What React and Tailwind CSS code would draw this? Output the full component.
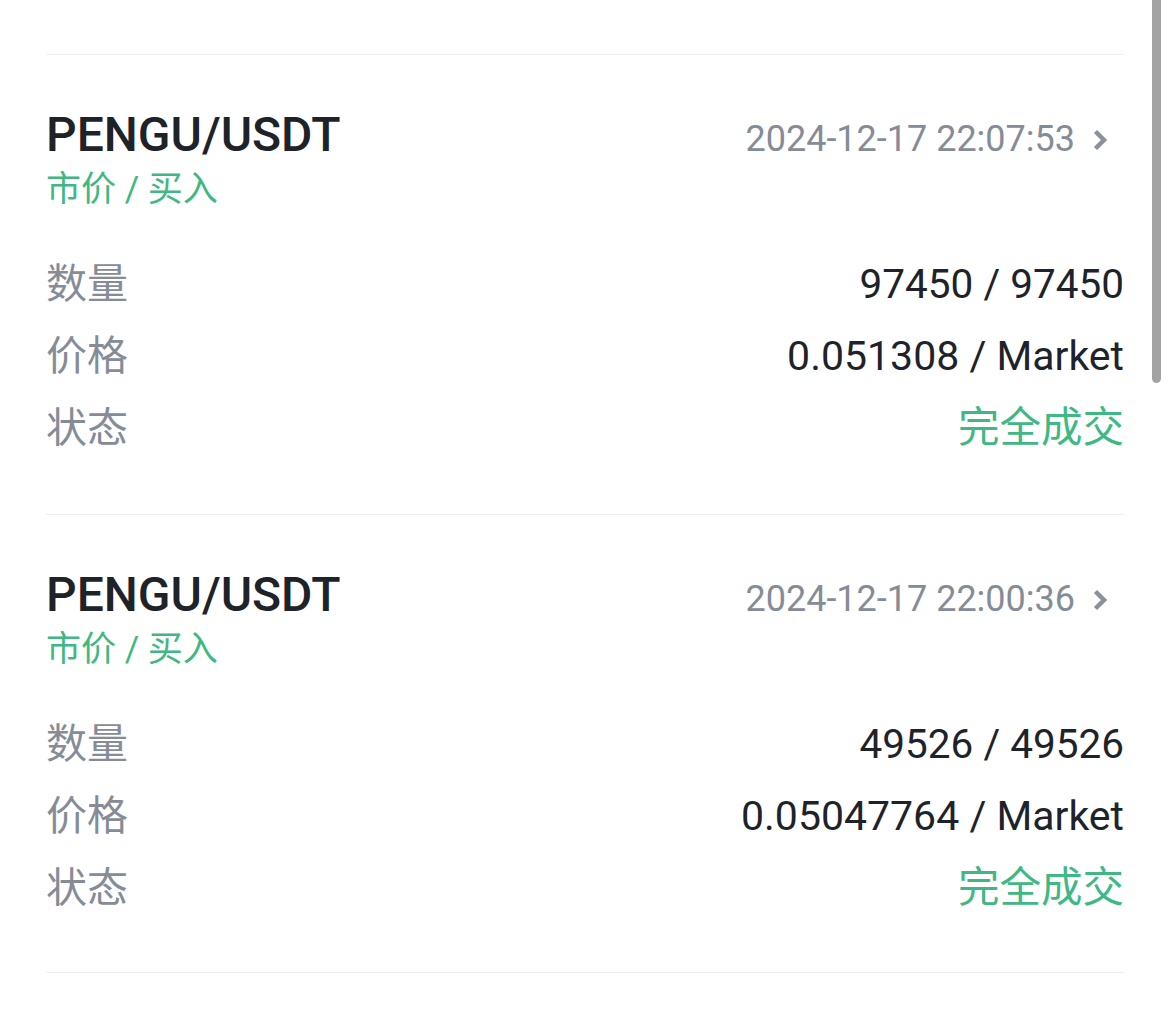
const orders = [
  { pair: 'PENGU/USDT', type: '市价 / 买入', time: '2024-12-17 22:07:53', qty: '97450 / 97450', price: '0.051308 / Market', status: '完全成交' },
  { pair: 'PENGU/USDT', type: '市价 / 买入', time: '2024-12-17 22:00:36', qty: '49526 / 49526', price: '0.05047764 / Market', status: '完全成交' },
]

const font = { fontFamily: 'Roboto, "Noto Sans CJK SC", sans-serif' }

const Chevron = () => (
  <svg width="18" height="24" viewBox="0 0 18 24" className="ml-[16px] mr-[15px] shrink-0 self-center translate-y-[1px]">
    <path d="M4.5 3.5 L13 12 L4.5 20.5" fill="none" stroke="#8a919c" strokeWidth="4.5" strokeLinecap="butt" strokeLinejoin="miter" />
  </svg>
)

const Row = ({ label, children }) => (
  <div className="flex h-[72px] items-center justify-between">
    <span className="text-[41px] leading-none text-[#858c97]">{label}</span>
    {children}
  </div>
)

const OrderCard = ({ order, last }) => (
  <div className={`border-b border-[#eeeff1] pt-[52px] ${last ? 'pb-[48px]' : 'pb-[50px]'}`}>
    <div className="flex items-baseline justify-between">
      <span className="text-[48px] font-medium leading-[56px] text-[#1e2329]">{order.pair}</span>
      <div className="flex items-baseline">
        <span className="text-[36px] leading-none text-[#858c97]">{order.time}</span>
        <Chevron />
      </div>
    </div>
    <div className="mt-[7px] text-[35px] leading-[40px] text-[#3fb883]">{order.type}</div>
    <div className="mt-[38px]">
      <Row label="数量">
        <span className="text-[40.5px] leading-none text-[#1e2329]">{order.qty}</span>
      </Row>
      <Row label="价格">
        <span className="text-[41px] leading-none text-[#1e2329]">{order.price}</span>
      </Row>
      <Row label="状态">
        <span className="text-[41.5px] leading-none text-[#3fb883]">{order.status}</span>
      </Row>
    </div>
  </div>
)

const App = () => (
  <div className="relative min-h-[1014px] bg-white" style={font}>
    <div className="pl-[46px] pr-[45px] pt-[54px]">
      <div className="border-t border-[#eeeff1]">
        {orders.map((order, i) => (
          <OrderCard key={i} order={order} last={i === orders.length - 1} />
        ))}
      </div>
    </div>
    <div className="absolute right-[8px] top-0 h-[383px] w-[9px] rounded-b-full bg-[#a3a3a3]" />
  </div>
)

export default App
